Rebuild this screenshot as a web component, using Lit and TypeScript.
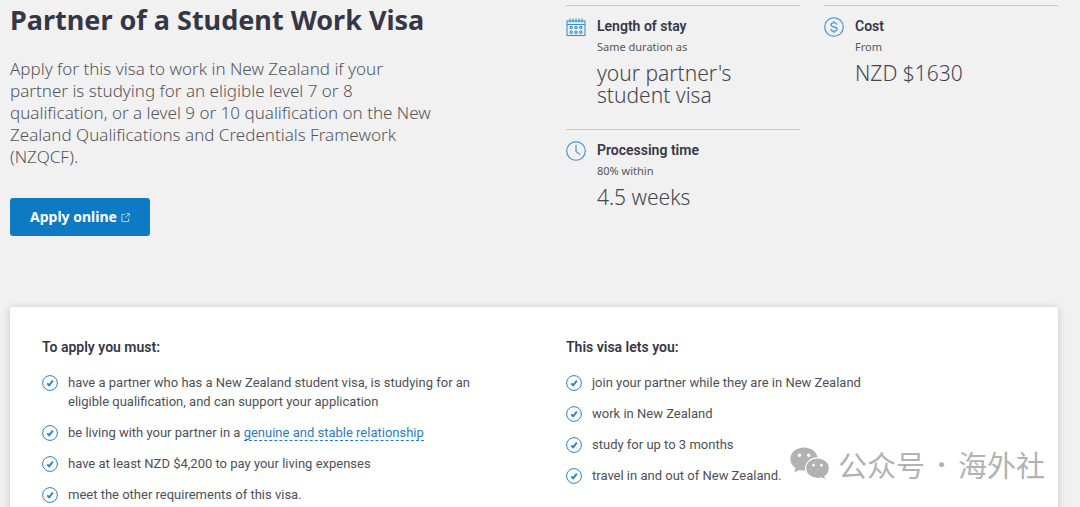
import { LitElement, html, css, svg, TemplateResult } from "lit";
import { customElement, property } from "lit/decorators.js";

const calendarIcon = svg`
  <rect x="1" y="4" width="18" height="14.5" />
  <path d="M1 7.5h18M4 1.5v4M7 1.5v4M10 1.5v4M13 1.5v4M16 1.5v4" />
  <circle cx="5.2" cy="10.6" r="1.2" /><circle cx="10" cy="10.6" r="1.2" /><circle cx="14.8" cy="10.6" r="1.2" />
  <circle cx="5.2" cy="15.2" r="1.2" /><circle cx="10" cy="15.2" r="1.2" /><circle cx="14.8" cy="15.2" r="1.2" />`;

const costIcon = svg`
  <circle cx="10" cy="10" r="9.3" />
  <path d="M13 7.6C12.7 6.3 11.6 5.7 10 5.7c-1.8 0-3 .8-3 2.1 0 1.5 1.5 1.8 3 2.1s3.1.7 3.1 2.2c0 1.4-1.3 2.2-3.1 2.2-1.7 0-2.9-.7-3.2-2.1M10 4v1.7M10 14.3V16" />`;

const clockIcon = svg`
  <circle cx="10" cy="10" r="9.3" />
  <path d="M10 3.8v6.7l4.3 3.1" />`;

@customElement("fact-card")
export class FactCard extends LitElement {
  @property() label = "";
  @property() note = "";
  @property() value = "";
  @property({ attribute: false }) icon?: TemplateResult;

  static styles = css`
    :host {
      display: flex;
      gap: 11px;
      border-top: 1px solid #c8c9cb;
      padding-top: 10px;
      padding-bottom: 23px;
    }
    .icon {
      flex: none;
      width: 20px;
      height: 20px;
      margin-top: 1px;
      fill: none;
      stroke: #3b8fcb;
      stroke-width: 1.1;
    }
    .label {
      margin: 0;
      font-family: Roboto, sans-serif;
      font-size: 14px;
      line-height: 20px;
      font-weight: 600;
      color: #363746;
    }
    .note {
      margin: 0;
      font-size: 11px;
      line-height: 22px;
      color: #55565c;
    }
    .value {
      margin: 4px 0 0;
      font-size: 21px;
      line-height: 22px;
      font-weight: 300;
      color: #45464d;
    }
  `;

  render() {
    return html`
      <svg class="icon" viewBox="0 0 20 20" aria-hidden="true">${this.icon}</svg>
      <div>
        <h2 class="label">${this.label}</h2>
        <p class="note">${this.note}</p>
        <p class="value">${this.value}</p>
      </div>
    `;
  }
}

@customElement("check-list")
export class CheckList extends LitElement {
  @property() heading = "";
  @property({ attribute: false }) items: unknown[] = [];

  static styles = css`
    :host {
      font-family: Roboto, sans-serif;
    }
    .heading {
      margin: 0 0 16px;
      font-size: 14px;
      line-height: 20px;
      font-weight: 600;
      color: #363746;
    }
    .list {
      display: grid;
      gap: 12px;
      margin: 0;
      padding: 0;
      list-style: none;
    }
    .item {
      display: flex;
      gap: 10px;
      font-size: 13px;
      line-height: 19px;
      color: #4f5056;
    }
    .tick {
      flex: none;
      width: 16px;
      height: 16px;
      margin-top: 2px;
      fill: none;
      stroke: #2683c6;
    }
    .text {
      max-width: 416px;
    }
    .link {
      color: #2a7cc0;
      text-decoration: none;
      border-bottom: 1px dashed #2a7cc0;
    }
  `;

  render() {
    return html`
      <h2 class="heading">${this.heading}</h2>
      <ul class="list">
        ${this.items.map(
          (item) => html`
            <li class="item">
              <svg class="tick" viewBox="0 0 16 16" aria-hidden="true">
                <circle cx="8" cy="8" r="7.4" />
                <path d="M5.2 8.4l2 1.9 3.6-4.7" stroke-width="1.9" />
              </svg>
              <span class="text">${item}</span>
            </li>
          `,
        )}
      </ul>
    `;
  }
}

@customElement("app-root")
export class AppRoot extends LitElement {
  static styles = css`
    :host {
      display: block;
      box-sizing: border-box;
      height: 100vh;
      overflow: hidden;
      position: relative;
      background: #f1f1f1;
      font-family: "Noto Sans", "Open Sans", sans-serif;
    }
    .page {
      display: flex;
      flex-direction: column;
      box-sizing: border-box;
      min-height: 100%;
      padding: 5px 22px 0 10px;
    }
    .intro {
      display: grid;
      grid-template-columns: 1fr 1fr;
      gap: 64px;
      min-height: 302px;
      align-items: start;
    }
    .title {
      margin: 0;
      font-size: 27px;
      line-height: 30px;
      font-weight: 700;
      white-space: nowrap;
      color: #363746;
    }
    .lead {
      max-width: 426px;
      margin: 23px 0 30px;
      font-size: 17px;
      line-height: 22px;
      font-weight: 300;
      color: #55565c;
    }
    .apply {
      display: flex;
      align-items: center;
      gap: 4px;
      height: 38px;
      padding: 0 20px;
      border: 0;
      border-radius: 3px;
      background: #0f7ac4;
      color: #fff;
      font: 700 14px/20px "Noto Sans", "Open Sans", sans-serif;
    }
    .external {
      width: 9px;
      height: 9px;
      fill: none;
      stroke: #b9dcf3;
    }
    .facts {
      display: grid;
      grid-template-columns: 1fr 1fr;
      column-gap: 24px;
    }
    .card {
      flex: 1;
      display: grid;
      grid-template-columns: 1fr 1fr;
      gap: 64px;
      padding: 30px 32px;
      border-radius: 3px 3px 0 0;
      background: #fff;
      box-shadow: 0 1px 8px rgba(0, 0, 0, 0.18);
    }
    .watermark {
      position: absolute;
      right: 35px;
      bottom: 22px;
      display: flex;
      align-items: center;
      color: #b2b2b2;
      font: 29px/42px "Noto Sans CJK SC", sans-serif;
    }
    .bubbles {
      width: 40px;
      height: 34px;
      margin-right: 8px;
    }
    .dot {
      width: 33px;
      text-align: center;
      font-family: "Noto Sans", sans-serif;
      font-weight: 700;
    }
  `;

  render() {
    return html`
      <main class="page">
        <section class="intro">
          <div>
            <h1 class="title">Partner of a Student Work Visa</h1>
            <p class="lead">
              Apply for this visa to work in New Zealand if your partner is studying for an eligible
              level 7 or 8 qualification, or a level 9 or 10 qualification on the New Zealand
              Qualifications and Credentials Framework (NZQCF).
            </p>
            <button class="apply" type="button">
              Apply online
              <svg class="external" viewBox="0 0 10 10" aria-hidden="true">
                <path d="M4.5 1.5H1v8h7.5V6M6 .7h3.3V4M9.2.8L4.6 5.4" />
              </svg>
            </button>
          </div>
          <div class="facts">
            <fact-card label="Length of stay" note="Same duration as" value="your partner's student visa" .icon=${calendarIcon}></fact-card>
            <fact-card label="Cost" note="From" value="NZD $1630" .icon=${costIcon}></fact-card>
            <fact-card label="Processing time" note="80% within" value="4.5 weeks" .icon=${clockIcon}></fact-card>
          </div>
        </section>
        <section class="card">
          <check-list
            heading="To apply you must:"
            .items=${[
              "have a partner who has a New Zealand student visa, is studying for an eligible qualification, and can support your application",
              html`be living with your partner in a <a class="link" href="#relationship">genuine and stable relationship</a>`,
              "have at least NZD $4,200 to pay your living expenses",
              "meet the other requirements of this visa.",
            ]}
          ></check-list>
          <check-list
            heading="This visa lets you:"
            .items=${[
              "join your partner while they are in New Zealand",
              "work in New Zealand",
              "study for up to 3 months",
              "travel in and out of New Zealand.",
            ]}
          ></check-list>
        </section>
      </main>
      <div class="watermark">
        <svg class="bubbles" viewBox="0 0 40 34" aria-hidden="true">
          <path fill="#b2b2b2" d="M14 .5C6.3.5.3 5.5.3 12c0 3.7 2 6.9 5.2 9L4.2 25.5l5.2-2.6c1.5.4 3 .6 4.6.6 7.7 0 13.7-5 13.7-11.5S21.7.5 14 .5z" />
          <path fill="#b2b2b2" stroke="#fff" stroke-width="1.2" d="M27.5 10.9c-6.7 0-11.9 4.5-11.9 10.3s5.2 10.3 11.9 10.3c1.5 0 2.9-.2 4.2-.6l4.3 2.3-1.1-3.8c2.8-1.9 4.5-4.8 4.5-8.2 0-5.8-5.2-10.3-11.9-10.3z" />
          <g fill="#fff">
            <circle cx="9.5" cy="8.3" r="1.7" /><circle cx="18.7" cy="8.3" r="1.7" />
            <circle cx="23.6" cy="18.2" r="1.4" /><circle cx="31.4" cy="18.2" r="1.4" />
          </g>
        </svg>
        <span>公众号</span><span class="dot">·</span><span>海外社</span>
      </div>
    `;
  }
}
